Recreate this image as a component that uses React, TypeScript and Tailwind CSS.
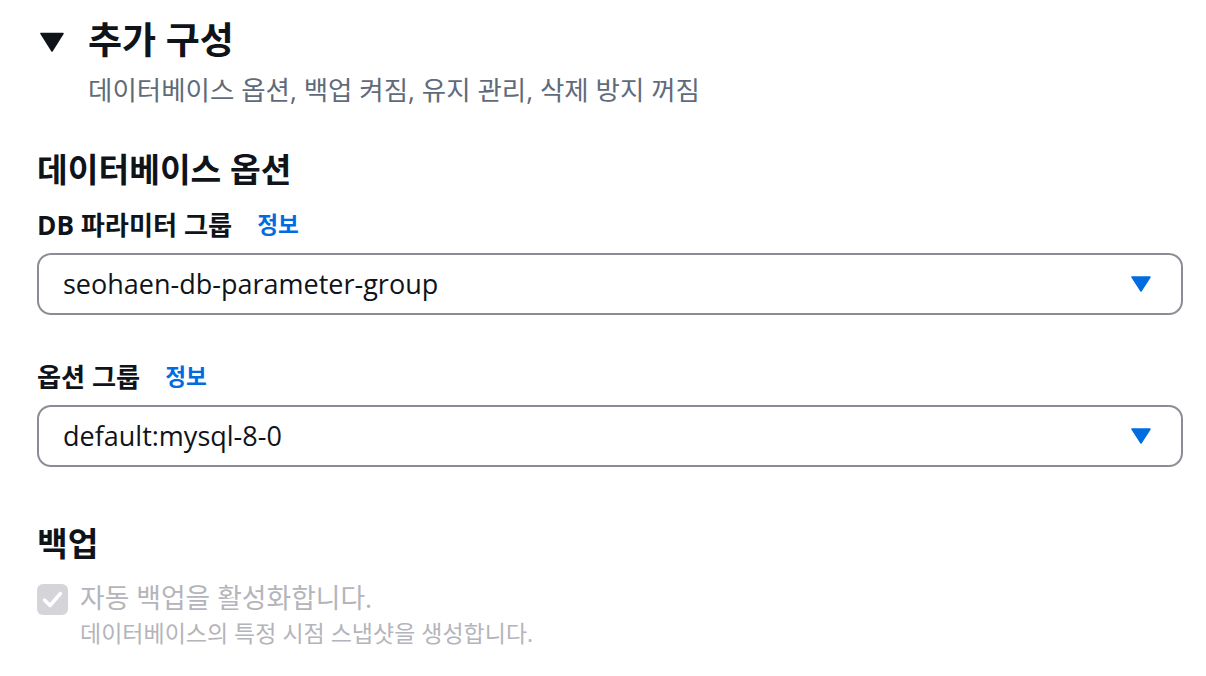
import React from "react";

const KR = { fontFamily: '"Open Sans", "Noto Sans CJK KR", sans-serif' };

function Caret() {
  return (
    <svg width="24" height="20" viewBox="0 0 24 20" className="shrink-0">
      <path d="M1 1.5 L23 1.5 L12 19 Z" fill="#0f141a" stroke="#0f141a" strokeWidth="1.5" strokeLinejoin="round" />
    </svg>
  );
}

function BlueTri() {
  return (
    <svg width="20" height="16" viewBox="0 0 20 16" className="shrink-0">
      <path d="M1 1 L19 1 L10 15 Z" fill="#006ce0" stroke="#006ce0" strokeWidth="1.5" strokeLinejoin="round" />
    </svg>
  );
}

function Select({ value }: { value: string }) {
  return (
    <div className="flex h-[62px] w-[1146px] items-center justify-between rounded-[14px] border-2 border-[#8c8c94] bg-white pl-[24px] pr-[30px]">
      <span className="text-[27px] leading-[34px] text-[#0f141a]">{value}</span>
      <BlueTri />
    </div>
  );
}

function Label({ text }: { text: string }) {
  return (
    <div className="flex h-[32px] items-center">
      <span className="text-[26.2px] font-bold leading-[32px] text-[#0f141a]">{text}</span>
      <span className="ml-[25px] text-[22.6px] font-bold leading-[32px] text-[#006ce0]">정보</span>
    </div>
  );
}

export default function App() {
  return (
    <div className="min-h-[676px] w-[1206px] bg-white pl-[37px] pt-[20px]" style={KR}>
      <div className="flex h-[40px] items-center">
        <div className="ml-[3px] mr-[24px] flex items-center pt-[4px]">
          <Caret />
        </div>
        <span className="text-[37px] font-bold leading-[40px] text-[#0f141a]">추가 구성</span>
      </div>
      <div className="mt-[14px] pl-[51px] text-[26.5px] leading-[32px] text-[#5f6b7a]">
        데이터베이스 옵션, 백업 켜짐, 유지 관리, 삭제 방지 꺼짐
      </div>

      <div className="mt-[43px] text-[33.4px] font-bold leading-[40px] text-[#0f141a]">데이터베이스 옵션</div>

      <div className="mt-[20px]">
        <Label text="DB 파라미터 그룹" />
      </div>
      <div className="mt-[12px]">
        <Select value="seohaen-db-parameter-group" />
      </div>

      <div className="mt-[46px]">
        <Label text="옵션 그룹" />
      </div>
      <div className="mt-[12px]">
        <Select value="default:mysql-8-0" />
      </div>

      <div className="mt-[56px] text-[33.4px] font-bold leading-[40px] text-[#0f141a]">백업</div>

      <div className="mt-[19px] flex items-start">
        <div className="mt-[2px] flex h-[31px] w-[31px] items-center justify-center rounded-[6px] bg-[#d5d5d9]">
          <svg width="31" height="31" viewBox="0 0 31 31">
            <path d="M7.5 16 L13 21.5 L23.5 9.5" fill="none" stroke="#ffffff" strokeWidth="3.5" strokeLinecap="round" strokeLinejoin="round" />
          </svg>
        </div>
        <div className="ml-[12px]">
          <div className="text-[26.8px] leading-[32px] text-[#b4b4bb]">자동 백업을 활성화합니다.</div>
          <div className="mt-[5px] text-[23px] leading-[28px] text-[#b4b4bb]">데이터베이스의 특정 시점 스냅샷을 생성합니다.</div>
        </div>
      </div>
    </div>
  );
}
